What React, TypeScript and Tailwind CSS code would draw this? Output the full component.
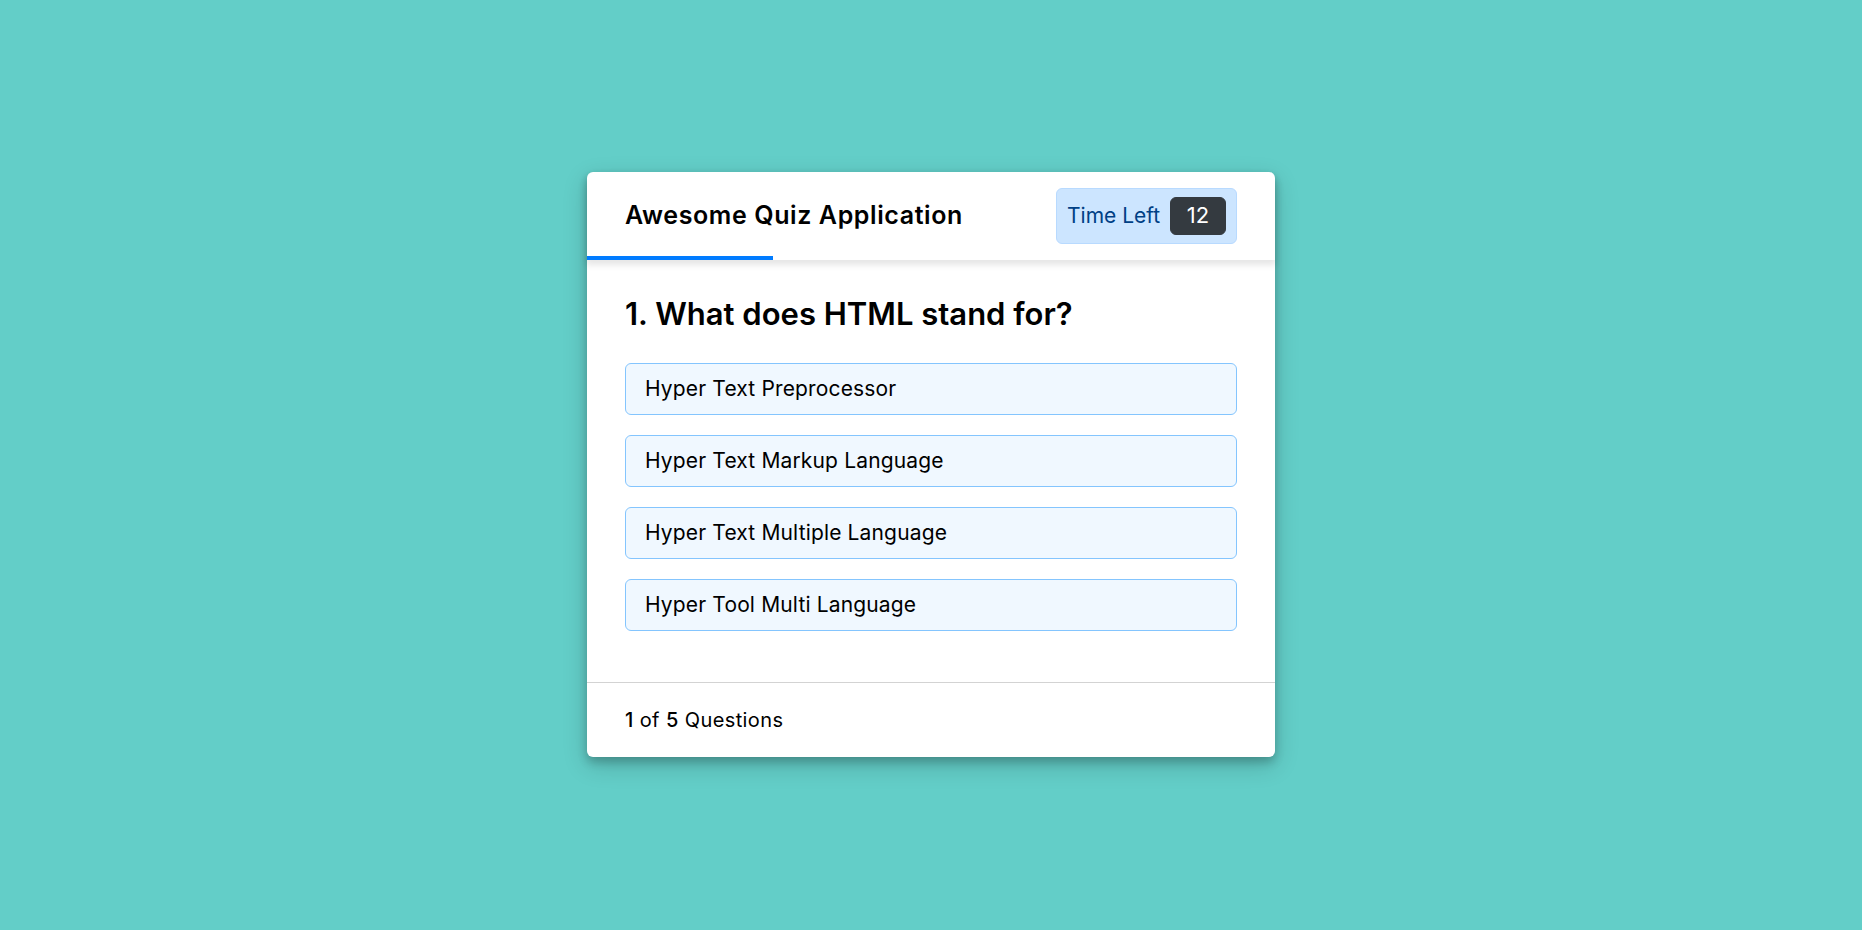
import { useState } from "react";

const options = [
  "Hyper Text Preprocessor",
  "Hyper Text Markup Language",
  "Hyper Text Multiple Language",
  "Hyper Tool Multi Language",
];

export default function App() {
  const [timeLeft] = useState(12);

  return (
    <div
      className="min-h-screen w-full bg-[#63cec8] flex items-center justify-center pb-[2px]"
      style={{ fontFamily: "Inter, 'Noto Sans', sans-serif" }}
    >
      {/* quiz box */}
      <div className="w-[688px] bg-white rounded-[6px] shadow-[0_5px_10px_0_rgba(0,0,0,0.2),0_8px_25px_0_rgba(0,0,0,0.19)]">
        <header className="relative h-[88px] px-[38px] flex items-center justify-between rounded-t-[6px] shadow-[0_4px_6px_1px_rgba(0,0,0,0.1)]">
          <div className="text-[25px] tracking-[0.6px] font-semibold text-black">Awesome Quiz Application</div>
          <div className="w-[181px] h-[56px] px-[10px] flex items-center justify-between bg-[#cce5ff] border border-[#b8daff] rounded-[6px]">
            <span className="text-[21px] text-[#004085]">Time Left</span>
            <span className="w-[56px] h-[38px] flex items-center justify-center bg-[#343a40] border border-[#343a40] rounded-[6px] text-white text-[22px]">
              {timeLeft}
            </span>
          </div>
          <div className="absolute left-0 bottom-0 h-[4px] w-[186px] bg-[#007bff]" />
        </header>

        <section className="px-[38px] pt-[30px] pb-[51px]">
          <div className="text-[31px] leading-[47px] font-semibold text-black">1. What does HTML stand for?</div>
          <div className="mt-[26px] flex flex-col gap-[20px]">
            {options.map((o) => (
              <div
                key={o}
                className="h-[52px] px-[19px] flex items-center bg-[#f0f8ff] border border-[#84c5fe] rounded-[6px] text-[21px] tracking-[0.15px] text-black cursor-pointer"
              >
                {o}
              </div>
            ))}
          </div>
        </section>

        <footer className="h-[75px] px-[38px] flex items-center border-t border-[#d3d3d3]">
          <span className="text-[20px] tracking-[0.4px] text-black">
            <span className="font-medium">1</span> of <span className="font-medium">5</span> Questions
          </span>
        </footer>
      </div>
    </div>
  );
}
